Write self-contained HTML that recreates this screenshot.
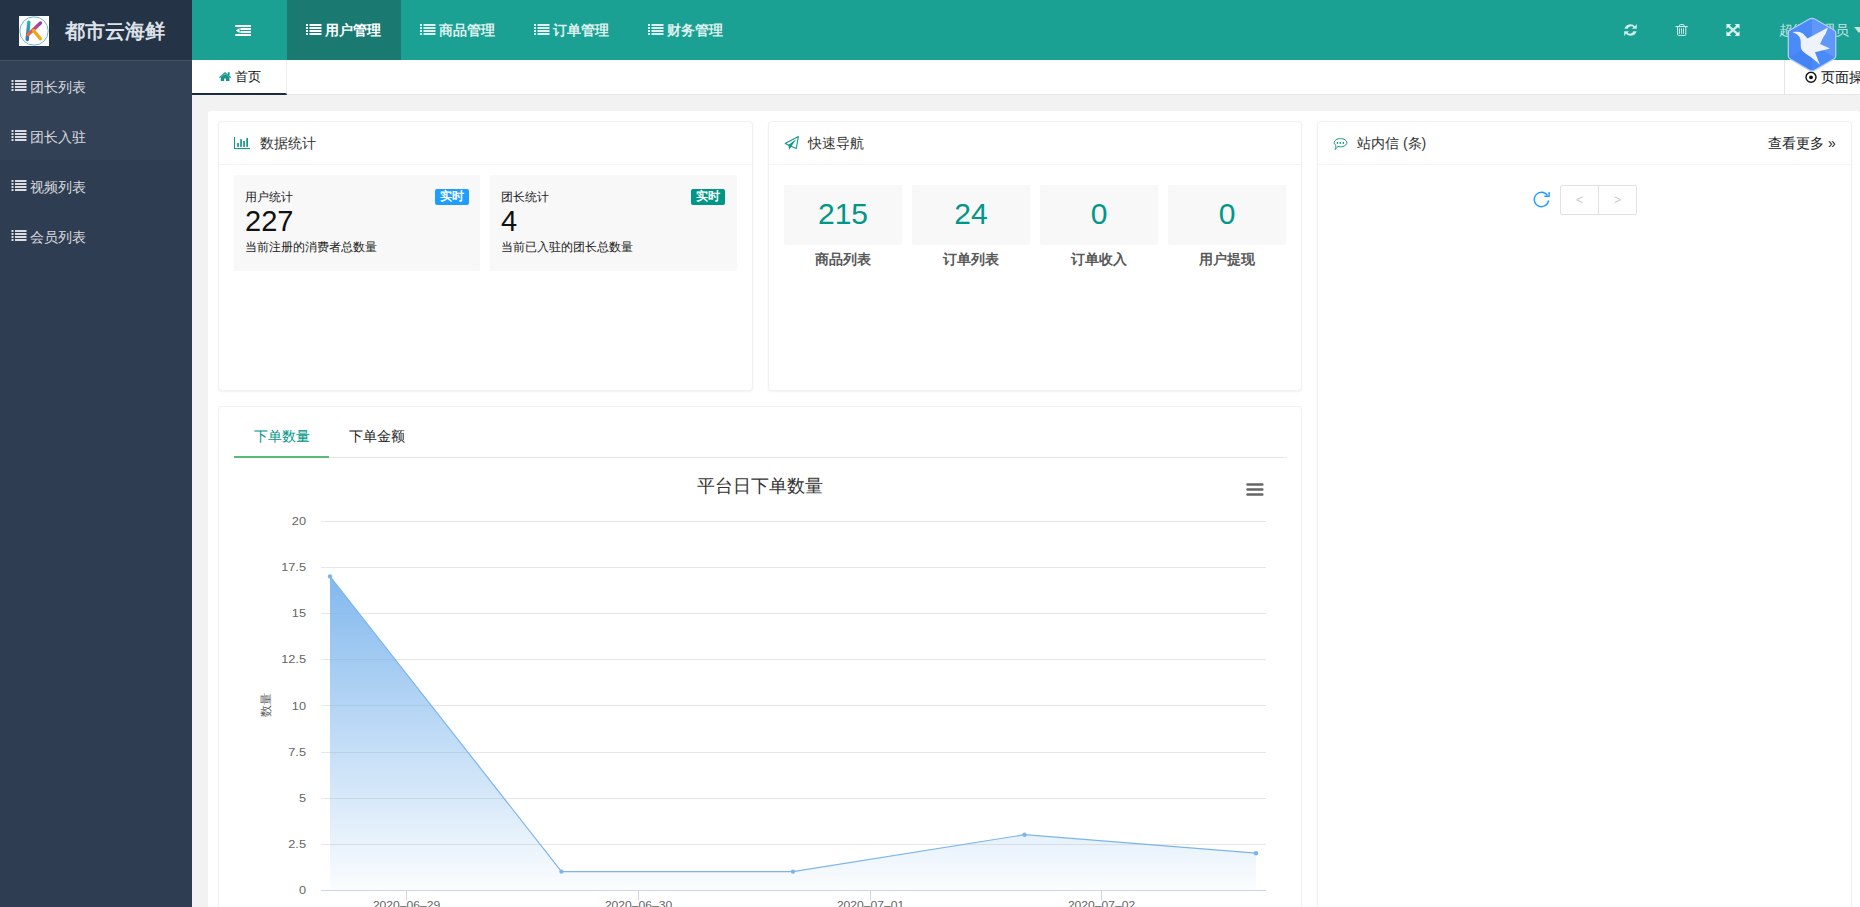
<!DOCTYPE html>
<html><head><meta charset="utf-8">
<style>
*{box-sizing:border-box;margin:0;padding:0}
html,body{width:1860px;height:907px;overflow:hidden}
body{position:relative;background:#f2f2f2;font-family:"Liberation Sans",sans-serif;font-size:14px;color:#333}
.a{position:absolute}
.nw{white-space:nowrap}
#side{left:0;top:0;width:192px;height:907px;background:#2f3d53}
#logo{left:0;top:0;width:192px;height:60px;background:#243346}
#logoln{left:0;top:60px;width:192px;height:1px;background:#4a5464}
.mi{left:0;width:192px;height:50px;color:rgba(255,255,255,.82)}
.mi svg{position:absolute;left:11px;top:20px}
.mi span{position:absolute;left:30px;top:19px;font-size:14px;line-height:16px;white-space:nowrap}
#hdr{left:192px;top:0;width:1668px;height:60px;background:#1ba094}
.nv{top:0;width:114px;height:60px;color:rgba(255,255,255,.85)}
.nv svg{position:absolute;left:19px;top:24px}
.nv span{position:absolute;left:38px;top:22px;font-size:14px;line-height:16px;font-weight:bold;white-space:nowrap}
#tabs{left:192px;top:60px;width:1668px;height:35px;background:#fff;border-bottom:1px solid #e6e6e6}
#wrap{left:208px;top:111px;width:1652px;height:820px;background:#fff;border-radius:3px}
.card{background:#fff;border:1px solid #f1f1f1;border-radius:4px;box-shadow:0 1px 2px rgba(0,0,0,.05)}
.ch{left:0;top:0;width:100%;height:43px;border-bottom:1px solid #f4f4f4}
.ch span{position:absolute;top:13px;font-size:14px;line-height:16px;color:#333;white-space:nowrap}
.sb{background:#f8f8f8;border-radius:2px}
.sb .t1{left:11px;top:15px;font-size:12px;line-height:14px;color:#222;white-space:nowrap}
.sb .n{left:11px;top:30px;font-size:29px;line-height:32px;color:#111}
.sb .t2{left:11px;top:65px;font-size:12px;line-height:14px;color:#222;white-space:nowrap}
.badge{width:34px;height:16px;border-radius:2px;color:#fff;font-size:12px;line-height:14px;text-align:center;font-weight:bold}
.qb{width:118px;height:60px;background:#f8f8f8;border-radius:2px;color:#009688;font-size:30px;line-height:58px;text-align:center}
.ql{width:118px;text-align:center;font-size:14px;line-height:16px;font-weight:bold;color:#595959;white-space:nowrap}
.yl{width:40px;text-align:right;font-size:11px;line-height:12px;color:#666}
.xl{width:80px;text-align:center;font-size:11px;line-height:12px;color:#666}
</style></head><body>

<div id="side" class="a">
  <div id="logo" class="a">
    <svg class="a" style="left:19px;top:16px" width="30" height="30" viewBox="0 0 30 30">
      <defs>
        <linearGradient id="kg1" x1="0" y1="0" x2="0" y2="1"><stop offset="0" stop-color="#2bb3b0"/><stop offset="1" stop-color="#3a6fc0"/></linearGradient>
        <linearGradient id="kg2" x1="0" y1="1" x2="1" y2="0"><stop offset="0" stop-color="#f06a3a"/><stop offset="1" stop-color="#9a3ab0"/></linearGradient>
        <linearGradient id="kg3" x1="0" y1="0" x2="1" y2="1"><stop offset="0" stop-color="#f5a020"/><stop offset="1" stop-color="#e8b010"/></linearGradient>
      </defs>
      <rect width="30" height="30" fill="#fff"/>
      <circle cx="15" cy="15" r="14.2" fill="none" stroke="#6bb5cf" stroke-width="1"/>
      <line x1="9.8" y1="6.2" x2="8.2" y2="23.5" stroke="url(#kg1)" stroke-width="3.4" stroke-linecap="round"/>
      <line x1="9.2" y1="18.5" x2="21.5" y2="7" stroke="url(#kg2)" stroke-width="3.4" stroke-linecap="round"/>
      <line x1="14.5" y1="14.5" x2="21.5" y2="22.8" stroke="url(#kg3)" stroke-width="3.4" stroke-linecap="round"/>
    </svg>
    <div class="a nw" style="left:65px;top:19px;font-size:20px;line-height:24px;font-weight:bold;color:#dde1e8">都市云海鲜</div>
  </div>
  <div id="logoln" class="a"></div>
  <div class="mi a" style="top:61px;height:99px;background:#334157"></div>
  <div class="mi a" style="top:60px"><svg width="16" height="12" viewBox="0 0 16 12"><g fill="currentColor"><rect x="0.5" y="0" width="2" height="2"/><rect x="4" y="0" width="11.5" height="2"/><rect x="0.5" y="3" width="2" height="2"/><rect x="4" y="3" width="11.5" height="2"/><rect x="0.5" y="6" width="2" height="2"/><rect x="4" y="6" width="11.5" height="2"/><rect x="0.5" y="9" width="2" height="2"/><rect x="4" y="9" width="11.5" height="2"/></g></svg><span>团长列表</span></div>
  <div class="mi a" style="top:110px"><svg width="16" height="12" viewBox="0 0 16 12"><g fill="currentColor"><rect x="0.5" y="0" width="2" height="2"/><rect x="4" y="0" width="11.5" height="2"/><rect x="0.5" y="3" width="2" height="2"/><rect x="4" y="3" width="11.5" height="2"/><rect x="0.5" y="6" width="2" height="2"/><rect x="4" y="6" width="11.5" height="2"/><rect x="0.5" y="9" width="2" height="2"/><rect x="4" y="9" width="11.5" height="2"/></g></svg><span>团长入驻</span></div>
  <div class="mi a" style="top:160px"><svg width="16" height="12" viewBox="0 0 16 12"><g fill="currentColor"><rect x="0.5" y="0" width="2" height="2"/><rect x="4" y="0" width="11.5" height="2"/><rect x="0.5" y="3" width="2" height="2"/><rect x="4" y="3" width="11.5" height="2"/><rect x="0.5" y="6" width="2" height="2"/><rect x="4" y="6" width="11.5" height="2"/><rect x="0.5" y="9" width="2" height="2"/><rect x="4" y="9" width="11.5" height="2"/></g></svg><span>视频列表</span></div>
  <div class="mi a" style="top:210px"><svg width="16" height="12" viewBox="0 0 16 12"><g fill="currentColor"><rect x="0.5" y="0" width="2" height="2"/><rect x="4" y="0" width="11.5" height="2"/><rect x="0.5" y="3" width="2" height="2"/><rect x="4" y="3" width="11.5" height="2"/><rect x="0.5" y="6" width="2" height="2"/><rect x="4" y="6" width="11.5" height="2"/><rect x="0.5" y="9" width="2" height="2"/><rect x="4" y="9" width="11.5" height="2"/></g></svg><span>会员列表</span></div>
</div>

<div id="hdr" class="a">
  <!-- outdent icon -->
  <svg class="a" style="left:43px;top:24px" width="17" height="13" viewBox="0 0 17 13"><g fill="#fff"><rect x="0.3" y="1" width="15.6" height="2"/><rect x="5.4" y="4" width="10.5" height="2"/><rect x="5.4" y="7" width="10.5" height="2"/><rect x="0.3" y="10" width="15.6" height="2"/><path d="M0.7 6.5 L4.6 3.9 L4.6 9.1 Z"/></g></svg>
  <div class="nv a" style="left:95px;background:#1a7a71;color:#fff"><svg width="16" height="12" viewBox="0 0 16 12"><g fill="currentColor"><rect x="0" y="0" width="2" height="2"/><rect x="3.5" y="0" width="12" height="2"/><rect x="0" y="3" width="2" height="2"/><rect x="3.5" y="3" width="12" height="2"/><rect x="0" y="6" width="2" height="2"/><rect x="3.5" y="6" width="12" height="2"/><rect x="0" y="9" width="2" height="2"/><rect x="3.5" y="9" width="12" height="2"/></g></svg><span>用户管理</span></div>
  <div class="nv a" style="left:209px"><svg width="16" height="12" viewBox="0 0 16 12"><g fill="currentColor"><rect x="0" y="0" width="2" height="2"/><rect x="3.5" y="0" width="12" height="2"/><rect x="0" y="3" width="2" height="2"/><rect x="3.5" y="3" width="12" height="2"/><rect x="0" y="6" width="2" height="2"/><rect x="3.5" y="6" width="12" height="2"/><rect x="0" y="9" width="2" height="2"/><rect x="3.5" y="9" width="12" height="2"/></g></svg><span>商品管理</span></div>
  <div class="nv a" style="left:323px"><svg width="16" height="12" viewBox="0 0 16 12"><g fill="currentColor"><rect x="0" y="0" width="2" height="2"/><rect x="3.5" y="0" width="12" height="2"/><rect x="0" y="3" width="2" height="2"/><rect x="3.5" y="3" width="12" height="2"/><rect x="0" y="6" width="2" height="2"/><rect x="3.5" y="6" width="12" height="2"/><rect x="0" y="9" width="2" height="2"/><rect x="3.5" y="9" width="12" height="2"/></g></svg><span>订单管理</span></div>
  <div class="nv a" style="left:437px"><svg width="16" height="12" viewBox="0 0 16 12"><g fill="currentColor"><rect x="0" y="0" width="2" height="2"/><rect x="3.5" y="0" width="12" height="2"/><rect x="0" y="3" width="2" height="2"/><rect x="3.5" y="3" width="12" height="2"/><rect x="0" y="6" width="2" height="2"/><rect x="3.5" y="6" width="12" height="2"/><rect x="0" y="9" width="2" height="2"/><rect x="3.5" y="9" width="12" height="2"/></g></svg><span>财务管理</span></div>

  <!-- right icons -->
  <svg class="a" style="left:1431.5px;top:24px" width="13" height="12" viewBox="0 0 13 12"><g fill="rgba(255,255,255,.8)"><path d="M0.47 4.82 A6.18 6.18 0 0 1 11.0 2.2 L12.81 0.1 L12.81 4.82 L7.96 4.82 L9.4 3.5 A3.2 3.2 0 0 0 3.78 4.82 Z"/><path d="M12.53 7.18 A6.18 6.18 0 0 1 2.0 9.8 L0.19 11.9 L0.19 7.18 L5.04 7.18 L3.6 8.5 A3.2 3.2 0 0 0 9.22 7.18 Z"/></g></svg>
  <svg class="a" style="left:1483px;top:24px" width="13" height="12" viewBox="0 0 13 12"><g fill="rgba(255,255,255,.8)"><rect x="0.5" y="2" width="12.2" height="1.1"/><rect x="4" y="4.2" width="0.9" height="5.7"/><rect x="6" y="4.2" width="0.9" height="5.7"/><rect x="8" y="4.2" width="0.9" height="5.7"/></g><g fill="none" stroke="rgba(255,255,255,.8)" stroke-width="1"><path d="M4.5 2.3 V1.4 Q4.5 0.6 5.3 0.6 H8.3 Q9.1 0.6 9.1 1.4 V2.3"/><path d="M2.6 3 V10.6 Q2.6 11.4 3.4 11.4 H10 Q10.8 11.4 10.8 10.6 V3"/></g></svg>
  <svg class="a" style="left:1534px;top:24px" width="14" height="12" viewBox="0 0 14 12"><g fill="rgba(255,255,255,.8)"><path d="M0.4 0 H5.4 L0.4 4.9 Z"/><path d="M13.6 0 H8.6 L13.6 4.9 Z"/><path d="M0.4 12 H5.4 L0.4 7.1 Z"/><path d="M13.6 12 H8.6 L13.6 7.1 Z"/></g><g stroke="rgba(255,255,255,.8)" stroke-width="2.3"><path d="M2 1.6 L12 10.4 M12 1.6 L2 10.4"/></g></svg>
  <div class="a nw" style="left:1587px;top:22px;font-size:14px;line-height:16px;color:rgba(255,255,255,.75)">超级管理员</div>
  <svg class="a" style="left:1662px;top:27px" width="8" height="6" viewBox="0 0 8 6"><path d="M0 0 H10 L5 6 Z" fill="rgba(255,255,255,.75)"/></svg>
</div>

<div id="tabs" class="a">
  <div class="a" style="left:0;top:0;width:95px;height:34px;border-right:1px solid #eee"></div>
  <div class="a" style="left:0;top:33px;width:95px;height:2px;background:#1b2b40;border-radius:0 2px 0 0"></div>
  <svg class="a" style="left:27.3px;top:11.8px" width="12.2" height="9.4" viewBox="0 0 12.2 9.4"><g fill="#13968a"><path d="M6.1 0 L0 5.2 L0.8 6 L6.1 1.6 L11.4 6 L12.2 5.2 Z"/><path d="M1.8 5.1 L6.1 1.9 L10.4 5.1 V9.4 H7 V6.6 H5.2 V9.4 H1.8 Z"/><rect x="8.8" y="0.2" width="1.8" height="3.2"/></g></svg>
  <div class="a nw" style="left:43px;top:10px;font-size:13px;line-height:14px;color:#111">首页</div>
  <div class="a" style="left:1592px;top:0;width:1px;height:34px;background:#e6e6e6"></div>
  <svg class="a" style="left:1613px;top:11px" width="13" height="13" viewBox="0 0 13 13"><circle cx="6" cy="6.3" r="5" fill="none" stroke="#111" stroke-width="1.4"/><circle cx="6" cy="6.3" r="1.9" fill="#111"/></svg>
  <div class="a nw" style="left:1629px;top:10px;font-size:14px;line-height:15px;color:#111">页面操作</div>
</div>

<div id="wrap" class="a"></div>

<!-- Card 1 -->
<div class="card a" style="left:218px;top:121px;width:535px;height:270px">
  <div class="ch a">
    <svg class="a" style="left:15px;top:15px" width="17" height="13" viewBox="0 0 17 13"><g fill="#16968a"><rect x="0" y="0" width="1" height="12"/><rect x="0" y="11" width="16" height="1.1"/><rect x="3.2" y="6" width="1.7" height="3.9"/><rect x="6.2" y="2.2" width="1.7" height="7.7"/><rect x="9.2" y="4" width="1.7" height="5.9"/><rect x="12.3" y="1" width="1.7" height="8.9"/></g></svg>
    <span style="left:41px">数据统计</span>
  </div>
  <div class="sb a" style="left:15px;top:53px;width:246px;height:96px">
    <div class="t1 a">用户统计</div>
    <div class="n a">227</div>
    <div class="t2 a">当前注册的消费者总数量</div>
    <div class="badge a" style="left:201px;top:14px;background:#1e9fff">实时</div>
  </div>
  <div class="sb a" style="left:271px;top:53px;width:247px;height:96px">
    <div class="t1 a">团长统计</div>
    <div class="n a">4</div>
    <div class="t2 a">当前已入驻的团长总数量</div>
    <div class="badge a" style="left:201px;top:14px;background:#009688">实时</div>
  </div>
</div>

<!-- Card 2 -->
<div class="card a" style="left:768px;top:121px;width:534px;height:270px">
  <div class="ch a">
    <svg class="a" style="left:15px;top:14px" width="16" height="15" viewBox="0 0 16 15"><g fill="none" stroke="#16968a" stroke-width="1.1" stroke-linejoin="round"><path d="M1.2 7.6 L14.3 0.6 L12.3 12.4 L7.2 10.2 Z"/></g><path d="M4.3 8.9 L12.5 3 L7.4 10.3 L5.3 13.8 Z" fill="#16968a"/></svg>
    <span style="left:39px">快速导航</span>
  </div>
  <div class="qb a" style="left:15px;top:63px">215</div>
  <div class="qb a" style="left:143px;top:63px">24</div>
  <div class="qb a" style="left:271px;top:63px">0</div>
  <div class="qb a" style="left:399px;top:63px">0</div>
  <div class="ql a" style="left:15px;top:129px">商品列表</div>
  <div class="ql a" style="left:143px;top:129px">订单列表</div>
  <div class="ql a" style="left:271px;top:129px">订单收入</div>
  <div class="ql a" style="left:399px;top:129px">用户提现</div>
</div>

<!-- Card 3 -->
<div class="card a" style="left:1317px;top:121px;width:535px;height:800px">
  <div class="ch a">
    <svg class="a" style="left:14px;top:14px" width="18" height="16" viewBox="0 0 18 16"><path d="M3.8 9.2 C2.7 8.4 2.2 7.6 2.2 6.7 C2.2 4.4 5 2.6 8.5 2.6 C12 2.6 14.8 4.4 14.8 6.7 C14.8 9 12 10.8 8.5 10.8 C7.5 10.8 6.6 10.7 5.8 10.4 C5 11.8 4 13 2.9 13.5 C3.6 12.2 4 10.8 3.8 9.2 Z" fill="none" stroke="#16968a" stroke-width="1"/><g fill="#16968a"><rect x="4.8" y="6" width="1.3" height="1.9"/><rect x="7.6" y="6" width="1.3" height="1.9"/><rect x="10.7" y="6" width="1.3" height="1.9"/></g></svg>
    <span style="left:39px">站内信 (条)</span>
    <span style="left:450px;color:#222">查看更多 »</span>
  </div>
  <svg class="a" style="left:214px;top:68px" width="20" height="18" viewBox="0 0 20 18"><g fill="none" stroke="#1e9fff" stroke-width="1.4"><path d="M16.6 10.4 A7.2 7.2 0 1 1 15.4 5.4"/><path d="M12.3 6.3 H17.1 V1.9"/></g></svg>
  <div class="a" style="left:242px;top:63px;width:77px;height:30px;border:1px solid #e2e2e2;border-radius:2px"></div>
  <div class="a" style="left:280px;top:63px;width:1px;height:30px;background:#e2e2e2"></div>
  <div class="a" style="left:243px;top:71px;width:37px;text-align:center;font-size:12px;line-height:14px;color:#c8c8c8">&lt;</div>
  <div class="a" style="left:281px;top:71px;width:37px;text-align:center;font-size:12px;line-height:14px;color:#c8c8c8">&gt;</div>
</div>

<!-- Chart card -->
<div class="card a" style="left:218px;top:406px;width:1084px;height:600px">
  <div class="a nw" style="left:35px;top:21px;font-size:14px;line-height:16px;color:#009688">下单数量</div>
  <div class="a nw" style="left:130px;top:21px;font-size:14px;line-height:16px;color:#222">下单金额</div>
  <div class="a" style="left:15px;top:50px;width:1053px;height:1px;background:#e6e6e6"></div>
  <div class="a" style="left:15px;top:49px;width:95px;height:2px;background:#5fb878"></div>
</div>

<svg class="a" style="left:0;top:0" width="1860" height="907" viewBox="0 0 1860 907">
  <defs><linearGradient id="ag" x1="0" y1="0" x2="0" y2="1"><stop offset="0" stop-color="#7cb5ec" stop-opacity="0.95"/><stop offset="1" stop-color="#7cb5ec" stop-opacity="0.03"/></linearGradient></defs>
  <text x="760" y="492" text-anchor="middle" font-size="18" fill="#333" font-family="Liberation Sans, sans-serif">平台日下单数量</text>
  <g fill="#666"><rect x="1246.3" y="483.2" width="17.2" height="2.6" rx="1"/><rect x="1246.3" y="488.2" width="17.2" height="2.6" rx="1"/><rect x="1246.3" y="493.2" width="17.2" height="2.6" rx="1"/></g>
  <g stroke="#e6e6e6" stroke-width="1">
    <path d="M321 521.5 H1266 M321 567.5 H1266 M321 613.5 H1266 M321 659.5 H1266 M321 705.5 H1266 M321 752.5 H1266 M321 798.5 H1266 M321 844.5 H1266"/>
  </g>
  <path d="M321 890.5 H1266" stroke="#ccd6eb" stroke-width="1"/>
  <path d="M406.5 890 V900 M638.5 890 V900 M870.5 890 V900 M1101.5 890 V900" stroke="#ccd6eb" stroke-width="1"/>
  <path d="M330 576.4 L561.5 871.6 L793 871.6 L1024.5 834.7 L1256 853.2 L1256 890 L330 890 Z" fill="url(#ag)"/>
  <path d="M330 576.4 L561.5 871.6 L793 871.6 L1024.5 834.7 L1256 853.2" fill="none" stroke="#7cb5ec" stroke-width="1.2"/>
  <g fill="#7cb5ec"><circle cx="330" cy="576.4" r="2.2"/><circle cx="561.5" cy="871.6" r="2.2"/><circle cx="793" cy="871.6" r="2.2"/><circle cx="1024.5" cy="834.7" r="2.2"/><circle cx="1256" cy="853.2" r="2.2"/></g>
  <g font-size="11" fill="#666" text-anchor="end" font-family="Liberation Sans, sans-serif" transform="translate(306 0) scale(1.16 1) translate(-306 0)">
    <text x="306" y="525.0">20</text><text x="306" y="571.0">17.5</text><text x="306" y="617.0">15</text><text x="306" y="663.0">12.5</text><text x="306" y="709.5">10</text><text x="306" y="756.0">7.5</text><text x="306" y="802.0">5</text><text x="306" y="848.0">2.5</text><text x="306" y="894.0">0</text>
  </g>
  <g font-size="11" fill="#666" text-anchor="middle" font-family="Liberation Sans, sans-serif"><text transform="translate(406.5 909) scale(1.1 1)">2020–06–29</text><text transform="translate(638.5 909) scale(1.1 1)">2020–06–30</text><text transform="translate(870.5 909) scale(1.1 1)">2020–07–01</text><text transform="translate(1101.5 909) scale(1.1 1)">2020–07–02</text></g>
  <text transform="translate(270 705) rotate(-90)" text-anchor="middle" font-size="12" fill="#666" font-family="Liberation Sans, sans-serif">数量</text>

  <!-- xunlei bird -->
  <g transform="translate(1812 44.5)">
    <path d="M0 -26.2 Q1.4 -26.2 2.6 -25.5 L22.2 -14.2 Q23.7 -13.3 23.7 -11.6 L23.7 11.6 Q23.7 13.3 22.2 14.2 L2.6 25.7 Q0 27.2 -2.6 25.7 L-22.2 14.2 Q-23.7 13.3 -23.7 11.6 L-23.7 -11.6 Q-23.7 -13.3 -22.2 -14.2 L-2.6 -25.5 Q-1.4 -26.2 0 -26.2 Z" fill="#4b8bf7" stroke="#b3cdff" stroke-width="1.3"/>
    <path d="M0 -25.5 L0 0 L22.8 12.8 L22.8 -12.8 Z" fill="#7aa9fa" opacity="0.45"/>
    <path d="M-22.8 12.8 L0 0 L0 25.5 Z" fill="#3f7ef2" opacity="0.5"/>
    <path d="M-19.4 -12.3 C-16 -12.8 -12.5 -13 -10 -11.4 C-8 -10.2 -6.5 -7.8 -4.5 -6 L16 -16.9 L13.4 -10.2 L11.7 -8 L8 -0.4 L18 3.9 L3 7.8 L8 20.4 C2 14.5 -3.5 11 -6.2 9.2 C-10 6.5 -11.4 4.5 -11.2 1.5 C-11.2 -2 -11 -5.5 -12.8 -8 C-14.5 -10.2 -17 -11.5 -19.4 -12.3 Z" fill="#eef2fd"/>
  </g>
</svg>
</body></html>
